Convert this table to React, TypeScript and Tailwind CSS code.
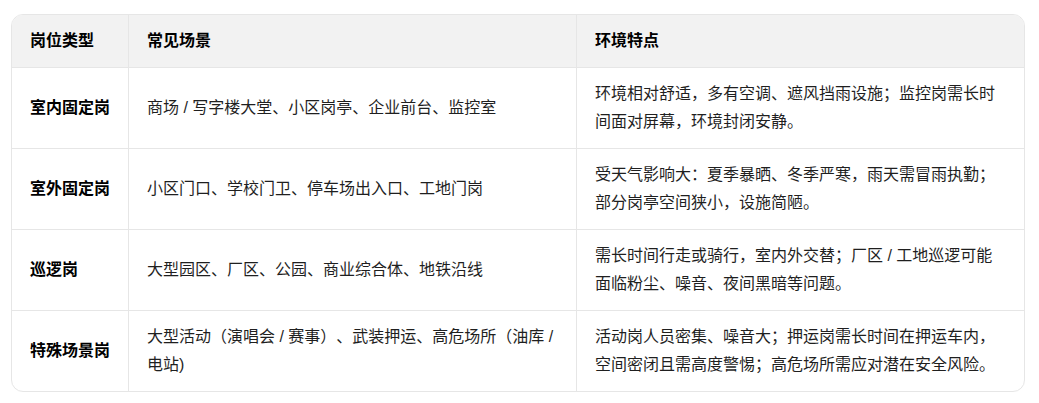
import React from "react";

const rows: [string, string, string][] = [
  [
    "室内固定岗",
    "商场 / 写字楼大堂、小区岗亭、企业前台、监控室",
    "环境相对舒适，多有空调、遮风挡雨设施；监控岗需长时间面对屏幕，环境封闭安静。",
  ],
  [
    "室外固定岗",
    "小区门口、学校门卫、停车场出入口、工地门岗",
    "受天气影响大：夏季暴晒、冬季严寒，雨天需冒雨执勤；部分岗亭空间狭小，设施简陋。",
  ],
  [
    "巡逻岗",
    "大型园区、厂区、公园、商业综合体、地铁沿线",
    "需长时间行走或骑行，室内外交替；厂区 / 工地巡逻可能面临粉尘、噪音、夜间黑暗等问题。",
  ],
  [
    "特殊场景岗",
    "大型活动（演唱会 / 赛事）、武装押运、高危场所（油库 / 电站)",
    "活动岗人员密集、噪音大；押运岗需长时间在押运车内，空间密闭且需高度警惕；高危场所需应对潜在安全风险。",
  ],
];

export default function App() {
  const font = {
    fontFamily:
      '"Liberation Sans", "Noto Sans CJK SC", "Noto Sans", sans-serif',
  };
  return (
    <div className="bg-white w-[1039px] h-[403px] pt-[14px] pl-[11px] [text-spacing-trim:space-all]" style={font}>
      <div className="w-[1014px] rounded-[12px] border border-[#e6e6e6] overflow-hidden">
        <div className="grid grid-cols-[116px_448px_448px] text-[16px] leading-[28px]">
          <div className="bg-[#f2f2f2] h-[52px] flex items-center px-[18px] font-bold text-black">
            岗位类型
          </div>
          <div className="bg-[#f2f2f2] h-[52px] flex items-center px-[18px] font-bold text-black border-l border-[#e6e6e6]">
            常见场景
          </div>
          <div className="bg-[#f2f2f2] h-[52px] flex items-center px-[18px] font-bold text-black border-l border-[#e6e6e6]">
            环境特点
          </div>
          {rows.map(([a, b, c]) => (
            <React.Fragment key={a}>
              <div className="h-[81px] border-t border-[#e6e6e6] flex items-center px-[18px] font-bold text-black">
                {a}
              </div>
              <div className="h-[81px] border-t border-l border-[#e6e6e6] flex items-center px-[18px] text-[#1f1f1f]">
                <span>{b}</span>
              </div>
              <div className="h-[81px] border-t border-l border-[#e6e6e6] flex items-center px-[18px] text-[#1f1f1f]">
                <span>{c}</span>
              </div>
            </React.Fragment>
          ))}
        </div>
      </div>
    </div>
  );
}
